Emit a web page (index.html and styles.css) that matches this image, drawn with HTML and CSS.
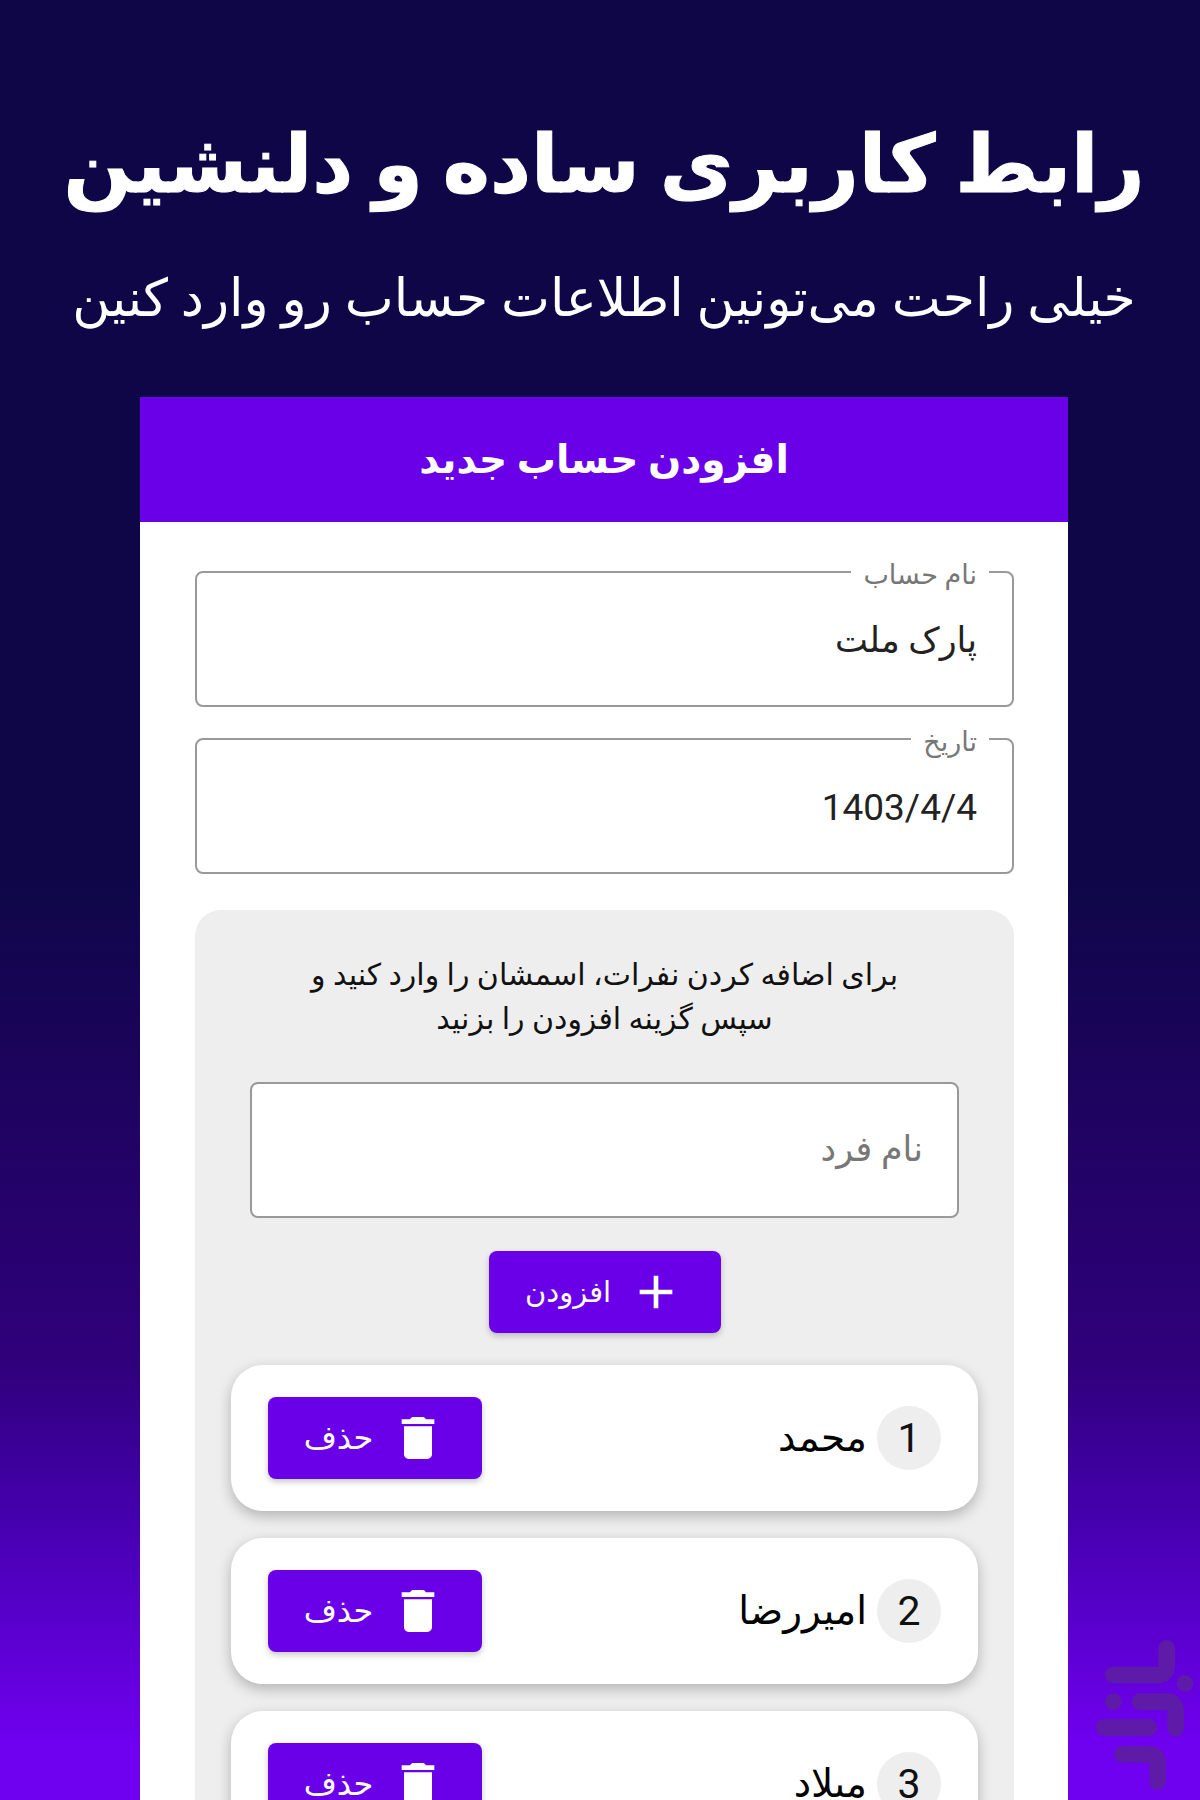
FILE: index.html
```html
<!DOCTYPE html>
<html lang="fa" dir="rtl">
<head>
<meta charset="utf-8">
<title>رابط کاربری ساده و دلنشین</title>
<link rel="stylesheet" href="styles.css">
</head>
<body>
<main class="page">
  <header class="hero">
    <h1 class="hero-title">رابط کاربری ساده و دلنشین</h1>
    <p class="hero-sub">خیلی راحت می‌تونین اطلاعات حساب رو وارد کنین</p>
  </header>
  <section class="card">
    <h2 class="card-head">افزودن حساب جدید</h2>
    <div class="card-body">
      <div class="field">
        <span class="field-label">نام حساب</span>
        <span class="field-value">پارک ملت</span>
      </div>
      <div class="field">
        <span class="field-label">تاریخ</span>
        <span class="field-value field-date">1403/4/4</span>
      </div>
      <div class="panel">
        <p class="hint">برای اضافه کردن نفرات، اسمشان را وارد کنید و<br>سپس گزینه افزودن را بزنید</p>
        <div class="person-input">نام فرد</div>
        <button class="btn btn-add" type="button">
          <svg class="btn-icon" viewBox="0 0 24 24"><path d="M19 13h-6v6h-2v-6H5v-2h6V5h2v6h6v2z"/></svg>
          <span>افزودن</span>
        </button>
        <ul class="people">
          <li class="person">
            <span class="num">1</span><span class="name">محمد</span>
            <button class="btn btn-del" type="button">
              <svg class="btn-icon" viewBox="0 0 24 24"><path d="M6 19c0 1.1.9 2 2 2h8c1.1 0 2-.9 2-2V7H6v12zM19 4h-3.5l-1-1h-5l-1 1H5v2h14V4z"/></svg>
              <span>حذف</span>
            </button>
          </li>
          <li class="person">
            <span class="num">2</span><span class="name">امیررضا</span>
            <button class="btn btn-del" type="button">
              <svg class="btn-icon" viewBox="0 0 24 24"><path d="M6 19c0 1.1.9 2 2 2h8c1.1 0 2-.9 2-2V7H6v12zM19 4h-3.5l-1-1h-5l-1 1H5v2h14V4z"/></svg>
              <span>حذف</span>
            </button>
          </li>
          <li class="person">
            <span class="num">3</span><span class="name">میلاد</span>
            <button class="btn btn-del" type="button">
              <svg class="btn-icon" viewBox="0 0 24 24"><path d="M6 19c0 1.1.9 2 2 2h8c1.1 0 2-.9 2-2V7H6v12zM19 4h-3.5l-1-1h-5l-1 1H5v2h14V4z"/></svg>
              <span>حذف</span>
            </button>
          </li>
        </ul>
      </div>
    </div>
  </section>
  <svg class="watermark" viewBox="0 0 420 600" aria-hidden="true">
    <g fill="none" stroke-width="50" stroke-linecap="round">
      <path d="M320 145V195Q320 225 290 225H160"/>
      <path d="M240 305H320Q347 305 347 335V385"/>
      <path d="M133 383H267"/>
      <path d="M187 463H265Q293 463 293 490V545"/>
    </g>
    <circle cx="375" cy="250" r="25"/>
    <circle cx="160" cy="305" r="25"/>
  </svg>
</main>
</body>
</html>
```
FILE: styles.css
```css
* { box-sizing: border-box; }
html, body { margin: 0; padding: 0; height: 1800px; overflow: hidden; }
body { font-family: Roboto, "DejaVu Sans", sans-serif; }
.page {
  position: relative;
  height: 1800px;
  overflow: hidden;
  padding: 100px 0 0 8px;
  background: linear-gradient(180deg, #0f0648 0%, #0f0648 49%, #30007c 76%, #4400ac 84%, #7000f0 97%, #7000f0 100%);
}
.hero { text-align: center; color: #fff; height: 297px; }
.hero-title { margin: 0; font-size: 80px; line-height: 130px; font-weight: 700; white-space: nowrap; -webkit-text-stroke: 1px #fff; }
.hero-sub { margin: 0; font-size: 52px; line-height: 70px; white-space: nowrap; padding-top: 34px; }
.card { width: 928px; margin: 0 auto; background: #fff; height: 1600px; }
.card-head {
  margin: 0; height: 125px; background: #6a00e8; color: #fff;
  font-size: 39px; font-weight: 700; line-height: 127px; text-align: center;
}
.card-body { padding: 49px 54px 0 55px; }
.field {
  position: relative; height: 136px; border: 2px solid #999; border-radius: 8px;
  margin-bottom: 31px; padding: 2px 35px 0; display: flex; align-items: center;
}
.field-label {
  position: absolute; top: -12px; right: 23px; padding: 0 12px;
  background: #fff; color: #777; font-size: 27px; line-height: 28px;
}
.field-value { font-size: 35px; color: #222; }
.field-date { font-size: 37px; }
.panel { margin-top: 36px; background: #eee; border-radius: 26px; padding: 43px 36px 0; }
.hint { margin: 0 0 41px; text-align: center; font-size: 30px; line-height: 44px; color: #111; }
.person-input {
  height: 136px; margin: 0 19px 33px; background: #fff; border: 2px solid #999; border-radius: 8px;
  padding: 0 34px 2px; display: flex; align-items: center; color: #777; font-size: 35px;
}
.btn {
  display: flex; align-items: center; justify-content: center; gap: 17px;
  height: 82px; border: 0; border-radius: 8px; background: #6a00e8; color: #fff;
  font: inherit; font-size: 29px; box-shadow: 0 3px 6px rgba(0,0,0,.22);
}
.btn-icon { width: 56px; height: 56px; fill: #fff; flex: none; }
.btn-add { width: 232px; margin: 0 auto 32px; }
.btn-del { width: 214px; margin-right: auto; font-size: 32px; }
.people { list-style: none; margin: 0; padding: 0; display: flex; flex-direction: column; gap: 27px; }
.person {
  height: 146px; background: #fff; border-radius: 32px; padding: 0 37px 0 37px;
  display: flex; align-items: center; box-shadow: 0 5px 14px rgba(0,0,0,.25);
}
.num {
  width: 64px; height: 64px; border-radius: 50%; background: #eee; margin-left: 10px;
  display: flex; align-items: center; justify-content: center; font-size: 41px; color: #111;
}
.name { font-size: 39px; color: #000; }
.watermark { position: absolute; right: 0; bottom: 0; width: 140px; height: 200px; }
.watermark g { stroke: #5d1ba8; }
.watermark circle { fill: #5d1ba8; }
```
